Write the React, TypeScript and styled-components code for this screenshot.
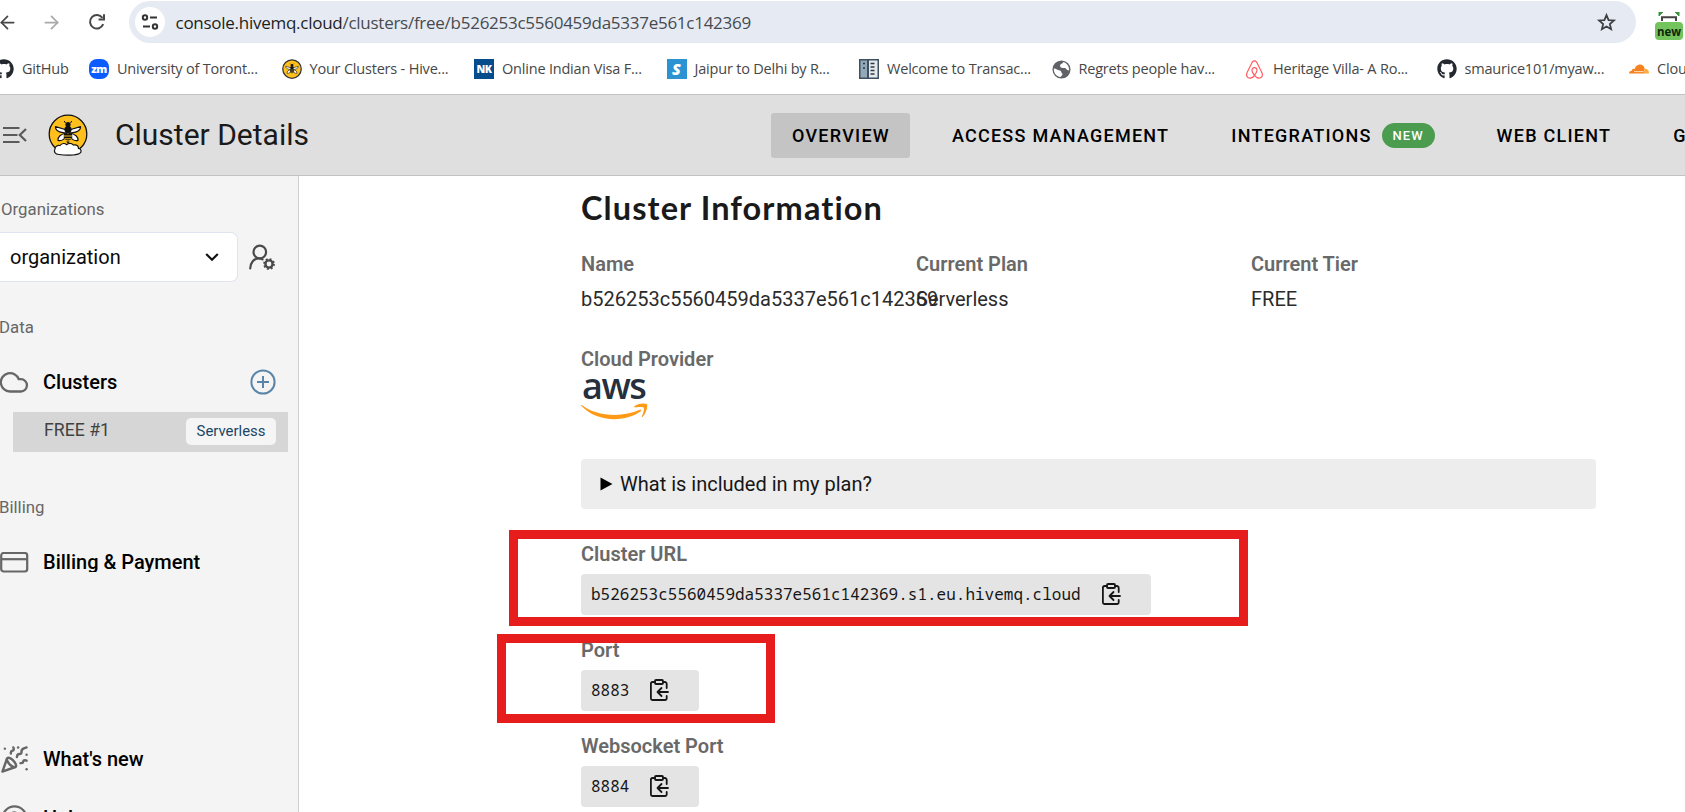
import React from "react";
import styled, { createGlobalStyle } from "styled-components";
import { FaGithub, FaAirbnb } from "react-icons/fa";
import { ArrowLeft, ArrowRight, PartyPopper, CircleHelp } from "lucide-react";

const GlobalStyle = createGlobalStyle`
  * { box-sizing: border-box; }
  body { margin: 0; background: #fff; font-family: Roboto, "Liberation Sans", sans-serif; overflow: hidden; }
  svg { display: block; flex: none; }
`;

const Page = styled.div`
  position: relative;
  display: flex;
  flex-direction: column;
  width: 1685px;
  height: 812px;
  overflow: hidden;
`;

/* ---------- Browser chrome ---------- */

const AddressRow = styled.div`
  display: flex;
  align-items: center;
  height: 44px;
  flex: none;
`;

const NavButtons = styled.div`
  display: flex;
  align-items: center;
  gap: 23px;
  width: 129px;
  color: #474747;
  svg:first-child { margin-left: -3px; }
  svg:last-child { margin-left: 2px; }
`;

const AddressBar = styled.div`
  display: flex;
  align-items: center;
  width: 1507px;
  height: 42px;
  padding: 0 19px 0 6px;
  border-radius: 21px;
  background: #e6ebf3;
`;

const SiteInfo = styled.div`
  display: flex;
  align-items: center;
  justify-content: center;
  width: 30px;
  height: 30px;
  margin-right: 10.5px;
  border-radius: 50%;
  background: #fff;
`;

const UrlText = styled.div`
  flex: 1;
  padding-top: 2px;
  font: 400 17px/24px "Open Sans", "Noto Sans", sans-serif;
  letter-spacing: -0.265px;
  color: #474a4f;
  b { font-weight: 400; color: #1d1e20; }
`;

const Extension = styled.div`
  display: flex;
  flex-direction: column;
  align-items: center;
  width: 28px;
  margin-left: 19px;
  padding-top: 8px;
`;

const ExtensionTag = styled.div`
  width: 28px;
  height: 18px;
  border-radius: 4px;
  background: #74c45d;
  color: #10240c;
  font: 700 11.5px/20px "Open Sans", sans-serif;
  text-align: center;
`;

const Bookmarks = styled.div`
  display: flex;
  align-items: center;
  height: 50px;
  margin-left: -6px;
  flex: none;
`;

const Bookmark = styled.div<{ $width?: number }>`
  display: flex;
  align-items: center;
  flex: none;
  gap: 8px;
  width: ${(p) => p.$width ?? 192.5}px;
  font: 400 14.5px/20px "Open Sans", "Noto Sans", sans-serif;
  letter-spacing: -0.2px;
  color: #474747;
  white-space: nowrap;
`;

const Favicon = styled.div<{ $bg?: string; $radius?: number; $size?: number; $spacing?: number }>`
  display: flex;
  align-items: center;
  justify-content: center;
  width: 20px;
  height: 20px;
  flex: none;
  border-radius: ${(p) => p.$radius ?? 0}px;
  background: ${(p) => p.$bg ?? "transparent"};
  color: #fff;
  font: 800 ${(p) => p.$size ?? 11}px/18px "Open Sans", sans-serif;
  letter-spacing: ${(p) => p.$spacing ?? 0}px;
`;

/* ---------- Console header ---------- */

const Header = styled.header`
  display: flex;
  align-items: center;
  flex: none;
  height: 82px;
  border-top: 1px solid #c2c2c2;
  border-bottom: 1px solid #c2c2c2;
  background: #dfdfdf;
`;

const Brand = styled.div`
  display: flex;
  align-items: center;
  flex: none;
  width: 771px;
  padding-left: 3px;
`;

const Logo = styled.div`
  margin-left: 21px;
`;

const Title = styled.div`
  margin-left: 27px;
  font-size: 30px;
  line-height: 36px;
  color: #1a1a1a;
`;

const Tabs = styled.nav`
  display: flex;
  flex: none;
  gap: 21px;
`;

const Tab = styled.div<{ $active?: boolean }>`
  display: flex;
  align-items: center;
  flex: none;
  height: 45px;
  padding: 0 20px 0 21px;
  border-radius: 3px;
  background: ${(p) => (p.$active ? "#c4c4c4" : "transparent")};
  color: #000;
  font-size: 18px;
  font-weight: 500;
  letter-spacing: 1.25px;
  white-space: nowrap;
`;

const NewBadge = styled.span`
  margin-left: 10px;
  width: 53px;
  height: 25px;
  border-radius: 13px;
  background: #4c9c50;
  color: #fff;
  font-size: 13px;
  font-weight: 500;
  line-height: 26px;
  letter-spacing: 1.1px;
  text-align: center;
`;

/* ---------- Sidebar ---------- */

const Body = styled.div`
  display: flex;
  flex: 1;
  min-height: 0;
`;

const Sidebar = styled.aside`
  display: flex;
  flex-direction: column;
  width: 299px;
  flex: none;
  border-right: 1px solid #cfcfcf;
  background: #f4f4f4;
  overflow: hidden;
`;

const SectionLabel = styled.div<{ $top: number; $indent?: number }>`
  flex: none;
  margin: ${(p) => p.$top}px 0 0 ${(p) => p.$indent ?? -1}px;
  font-size: 16.8px;
  line-height: 20px;
  color: #666;
`;

const OrgRow = styled.div`
  display: flex;
  align-items: center;
  gap: 11px;
  margin-top: 13px;
`;

const OrgSelect = styled.div`
  display: flex;
  align-items: center;
  justify-content: space-between;
  width: 238px;
  height: 50px;
  padding: 0 18px 1px 10px;
  border: 1px solid #dfe4f0;
  border-left: 0;
  border-radius: 0 7px 7px 0;
  background: #fff;
  font-size: 20px;
  color: #0a0a0a;
`;

const MenuItem = styled.div<{ $top: number }>`
  display: flex;
  align-items: center;
  flex: none;
  height: 28px;
  margin-top: ${(p) => p.$top}px;
  color: #666;
`;

const MenuText = styled.div`
  flex: 1;
  height: 24px;
  margin-left: 14px;
  overflow: hidden;
  font-size: 20px;
  font-weight: 500;
  line-height: 25px;
  color: #000;
`;

const ClippedText = styled(MenuText)`
  height: 20px;
  line-height: 21px;
`;

const PlusWrap = styled.div`
  margin-right: 22px;
`;

const ClusterRow = styled.div`
  display: flex;
  align-items: center;
  justify-content: space-between;
  flex: none;
  width: 275px;
  height: 40px;
  margin: 16px 0 0 13px;
  padding: 0 12px 0 31px;
  background: #d6d6d6;
  font-size: 17.7px;
  color: #424242;
`;

const ClusterName = styled.span`
  padding-bottom: 4px;
`;

const PlanChip = styled.span`
  width: 90px;
  height: 27px;
  margin-bottom: 1px;
  border-radius: 5px;
  background: #f5f5f5;
  color: #1b4566;
  font-size: 14.9px;
  line-height: 26px;
  text-align: center;
`;

/* ---------- Main ---------- */

const Main = styled.main`
  flex: 1;
  padding: 12px 0 0 282px;
`;

const Heading = styled.h1`
  margin: 0;
  font: 700 32.5px/40px Lato, sans-serif;
  letter-spacing: 1.1px;
  color: #1a1a1a;
  white-space: nowrap;
`;

const InfoGrid = styled.div`
  display: grid;
  grid-template-columns: repeat(3, 335px);
  margin-top: 24px;
`;

const Label = styled.div`
  font-size: 20px;
  font-weight: 600;
  line-height: 24px;
  color: #696969;
`;

const Value = styled.div`
  margin-top: 11px;
  font-size: 20px;
  line-height: 24px;
  color: #2b2b2b;
`;

const Provider = styled.div`
  margin-top: 36px;
  height: 112px;
`;

const AwsWord = styled.div`
  height: 32px;
  margin-left: 1px;
  font: 600 36px/29px "Open Sans", sans-serif;
  letter-spacing: -1.5px;
  color: #252f3e;
`;

const PlanDetails = styled.div`
  display: flex;
  align-items: center;
  width: 1015px;
  height: 50px;
  padding-left: 19px;
  gap: 7px;
  border-radius: 4px;
  background: #ededed;
  font-size: 20px;
  color: #161616;
`;

const Field = styled.div<{ $top: number }>`
  margin-top: ${(p) => p.$top}px;
`;

const CodeBox = styled.div`
  display: inline-flex;
  align-items: center;
  height: 41px;
  margin-top: 8px;
  padding: 0 28px 2px 10px;
  border-radius: 4px;
  background: #e4e4e4;
  font: 400 16px/20px "Noto Sans Mono", "DejaVu Sans Mono", monospace;
  color: #161616;
  vertical-align: top;
  svg { margin-left: 18px; }
`;

const Highlight = styled.div<{ $x: number; $y: number; $w: number; $h: number }>`
  position: absolute;
  left: ${(p) => p.$x}px;
  top: ${(p) => p.$y}px;
  width: ${(p) => p.$w}px;
  height: ${(p) => p.$h}px;
  border: 9px solid #e71c1c;
`;

/* ---------- Icons ---------- */

const ReloadIcon = () => (
  <svg width="20" height="20" viewBox="0 0 20 20" fill="none" stroke="#474747" strokeWidth="2">
    <path d="M16.2 12.2A6.8 6.8 0 1 1 15.4 5.8" />
    <path d="M17 2.2v5.3h-5.4" />
  </svg>
);

const TuneIcon = () => (
  <svg width="18" height="18" viewBox="0 0 18 18" fill="none" stroke="#333" strokeWidth="2">
    <circle cx="4" cy="4.5" r="2.2" />
    <path d="M9 4.5h7M2 13.5h7" />
    <circle cx="14" cy="13.5" r="2.2" />
  </svg>
);

const StarIcon = () => (
  <svg width="21" height="21" viewBox="0 0 24 24" fill="none" stroke="#3d4043" strokeWidth="2">
    <path d="M12 3.500l2.400 5.700 6.100.500-4.700 4 1.500 6-5.300-3.200-5.300 3.200 1.500-6-4.700-4 6.100-.5z" />
  </svg>
);

const ScanIcon = () => (
  <svg width="24" height="10" viewBox="0 0 24 10" fill="none">
    <path d="M2 0h4L2 4zM22 0h-4l4 4z" fill="#3d9140" stroke="#3d9140" />
    <path d="M5 9V5.200h14V9" stroke="#444" strokeWidth="2" />
  </svg>
);

const Bee = () => (
  <>
    <g fill="#fff" stroke="#111" strokeWidth="1.200" strokeLinejoin="round">
      <path d="M19 16L7.500 12.600c-.3 3.400 3 6.400 11.500 6.400zM21 16l11.500-3.400c.3 3.400-3 6.400-11.500 6.400z" />
      <path d="M18 19c-5 1-8.500 4-8 7.500 4 1 7.500-2 9-6zM22 19c5 1 8.500 4 8 7.500-4 1-7.500-2-9-6z" />
    </g>
    <circle cx="20" cy="10.500" r="2.600" fill="#111" />
    <ellipse cx="20" cy="15.500" rx="3.600" ry="3.600" fill="#111" />
    <path d="M17.500 9l-1.300-2M22.500 9l1.300-2" stroke="#111" />
    <path d="M15.800 19.500h8.400v4c0 1.500-1.500 2.500-4.200 3-2.700-.5-4.200-1.500-4.200-3z" fill="#111" />
    <path d="M16 22h8M16.500 24.800h7" stroke="#ffc01e" strokeWidth="1" />
  </>
);

const HiveLogo = () => (
  <svg width="40" height="42" viewBox="0 0 40 42">
    <circle cx="20" cy="20" r="18.800" fill="#ffc01e" stroke="#111" strokeWidth="1.300" />
    <Bee />
    <path d="M18.200 27.600h3.600L20 29.800z" fill="#111" />
    <path
      d="M11 40.500c-4 0-5.500-3-4-5.500 0-3 3-4 5-3.500 2-2.500 5-2.500 6.500-.8 2-1.500 5-1.700 7 .3 4-.5 5 1.500 5 3.500 3 .5 3.500 3.500 1 5-4 2-14 2-20.500 1z"
      fill="#fff"
      stroke="#111"
      strokeWidth="1.200"
    />
  </svg>
);

const HiveFavicon = () => (
  <svg width="20" height="20" viewBox="0 0 40 40">
    <circle cx="20" cy="20" r="18.500" fill="#ffc01e" stroke="#333" strokeWidth="2.500" />
    <g transform="translate(0 2)">
      <Bee />
    </g>
  </svg>
);

const CollapseIcon = () => (
  <svg width="24" height="18" viewBox="0 0 24 18" fill="none" stroke="#5a5a5a" strokeWidth="2.200">
    <path d="M0 2h16.500M0 9h14.500M0 16h16.500M23 3L16.800 9l6.200 6" />
  </svg>
);

const BuildingIcon = () => (
  <svg width="20" height="20" viewBox="0 0 20 20">
    <path fill="#3f5160" d="M0 0h20v20H0z" />
    <path fill="#93a9b8" d="M1.500 1.500h6.500v17H1.500z" />
    <path fill="#e4e9ec" d="M10 1.500h8.500v17H10z" />
    <path stroke="#2c3b47" strokeWidth="1.600" d="M4 4.500h2M4 9h2M11.500 4.500h4M11.500 8h4M11.500 11.500h4M11.500 15h4" />
  </svg>
);

const GlobeIcon = () => (
  <svg width="19" height="19" viewBox="0 0 20 20">
    <circle cx="10" cy="10" r="9.500" fill="#5f6368" />
    <path
      d="M2 9c3 0 3.500 2 6 2 2 0 1.500 2.500 3 3.500.5 1.500-1.500 2-2 3.500C4.500 17.500 1.500 13.500 2 9zM12 2.200c-.5 2-3.500 1.800-3.500 4 0 1.500 2 2.500 4.500 2.300 2 0 2 2.500 5 2.500C18.200 7 16 3.500 12 2.200z"
      fill="#fff"
    />
  </svg>
);

const CloudflareIcon = () => (
  <svg width="20" height="20" viewBox="0 0 20 20">
    <path d="M0 14.500c0-1.700 1.300-2.800 2.900-2.700-.1-1.600 1.500-2.500 2.800-1.800C6.500 7.200 8.600 5.500 11 5.500c2.500 0 4.300 1.700 4.700 4.200l-.6 4.800z" fill="#f6821f" />
    <path d="M14.200 14.500l2-4.700c2.200 0 3.800 1.900 3.800 4.200 0 .3-.1.500-.3.500z" fill="#fbad41" />
    <path d="M5 12.600h9.700" stroke="#fff" strokeWidth=".7" />
  </svg>
);

const UserCogIcon = () => (
  <svg width="27" height="27" viewBox="0 0 27 27" fill="none" stroke="#4a4a4a" strokeWidth="2.200" strokeLinecap="round">
    <circle cx="10.800" cy="8" r="6.300" />
    <path d="M1.200 24.500c0-5.500 3.500-10 8.500-10 1.500 0 2.800.3 3.800.9" />
    <circle cx="20" cy="20" r="3.600" strokeWidth="2.400" />
    <circle cx="20" cy="20" r="5" strokeWidth="1.800" strokeDasharray="1.900 2.030" strokeLinecap="butt" />
  </svg>
);

const ChevronIcon = () => (
  <svg width="14" height="10" viewBox="0 0 14 10" fill="none" stroke="#111" strokeWidth="2.200">
    <path d="M1.200 2L7 7.800 12.800 2" />
  </svg>
);

const CloudIcon = () => (
  <svg width="29" height="22" viewBox="0 0 29 22" fill="none" stroke="#666" strokeWidth="2.300">
    <path d="M10 20.500a9.200 9.200 0 1 1 8.700-12.300h2.100a6.150 6.150 0 0 1 0 12.300z" />
  </svg>
);

const PlusIcon = () => (
  <svg width="26" height="26" viewBox="0 0 26 26" fill="none" stroke="#5b85a8" strokeWidth="2">
    <circle cx="13" cy="13" r="11.600" />
    <path d="M13 7v12M7 13h12" />
  </svg>
);

const CardIcon = () => (
  <svg width="29" height="21" viewBox="0 0 29 21" fill="none" stroke="#666" strokeWidth="2.200">
    <rect x="1.200" y="1" width="26" height="18.500" rx="2.500" />
    <path d="M1 7.200h26" />
  </svg>
);

const CopyIcon = () => (
  <svg width="24" height="24" viewBox="0 0 24 24" fill="none" stroke="#161616" strokeWidth="1.800" strokeLinecap="round" strokeLinejoin="round">
    <path d="M8 4H5.700a1.800 1.800 0 0 0-1.800 1.800v14.700a1.500 1.500 0 0 0 1.500 1.500h12.800a1.500 1.500 0 0 0 1.500-1.500V18M16 4h1.900a1.800 1.800 0 0 1 1.800 1.800V10" />
    <rect x="8" y="2" width="8" height="4" rx="1" />
    <path d="M21 14H10.500M14.500 10l-4 4 4 4" />
  </svg>
);

const AwsSmile = () => (
  <svg width="67" height="17" viewBox="0 0 68 17" fill="#ff9a16">
    <path d="M.3 1.700C9 8.500 21 12 34 12c9 0 18-2 25.600-5.300 1.200-.5 2 .8 1 1.600C53.500 13.500 44 16.300 34 16.300 21 16.300 8.500 11.500.2 2.600-.3 2 .1 1.400.3 1.700z" />
    <path d="M54 3.300C57.500.6 63.500-.2 66.800 1c1.200 2-.5 9-4.100 12.800-.6.500-1.200.2-.9-.5 1-2.500 2.800-7.300 1.800-8.700-1-1.200-6.100-.6-8.800-.3-.9.100-1.300-.5-.8-1z" />
  </svg>
);

const TriangleIcon = () => (
  <svg width="13" height="14" viewBox="0 0 13 14" fill="#000">
    <path d="M.5.500L12.500 7 .5 13.500z" />
  </svg>
);

const CodeField = ({ label, value, top }: { label: string; value: string; top: number }) => (
  <Field $top={top}>
    <Label>{label}</Label>
    <CodeBox>
      {value}
      <CopyIcon />
    </CodeBox>
  </Field>
);

export default function App() {
  return (
    <Page>
      <GlobalStyle />
      <AddressRow>
        <NavButtons>
          <ArrowLeft size={21} strokeWidth={2} />
          <ArrowRight size={21} strokeWidth={2} color="#a9a9a9" />
          <ReloadIcon />
        </NavButtons>
        <AddressBar>
          <SiteInfo>
            <TuneIcon />
          </SiteInfo>
          <UrlText>
            <b>console.hivemq.cloud</b>/clusters/free/b526253c5560459da5337e561c142369
          </UrlText>
          <StarIcon />
        </AddressBar>
        <Extension>
          <ScanIcon />
          <ExtensionTag>new</ExtensionTag>
        </Extension>
      </AddressRow>

      <Bookmarks>
        <Bookmark $width={95}>
          <FaGithub size={20} color="#24292f" />
          GitHub
        </Bookmark>
        <Bookmark>
          <Favicon $bg="#0b5cff" $radius={8} $size={11} $spacing={-0.5}>zm</Favicon>
          University of Toront...
        </Bookmark>
        <Bookmark>
          <HiveFavicon />
          Your Clusters - Hive...
        </Bookmark>
        <Bookmark>
          <Favicon $bg="#044c8c" $size={10.5} $spacing={-0.5}>NK</Favicon>
          Online Indian Visa F...
        </Bookmark>
        <Bookmark>
          <Favicon $bg="#2b93d1" $size={16}><i>S</i></Favicon>
          Jaipur to Delhi by R...
        </Bookmark>
        <Bookmark>
          <BuildingIcon />
          Welcome to Transac...
        </Bookmark>
        <Bookmark>
          <GlobeIcon />
          Regrets people hav...
        </Bookmark>
        <Bookmark>
          <FaAirbnb size={21} color="#ff5a5f" />
          Heritage Villa- A Ro...
        </Bookmark>
        <Bookmark>
          <FaGithub size={20} color="#24292f" />
          smaurice101/myaw...
        </Bookmark>
        <Bookmark>
          <CloudflareIcon />
          Cloudflare
        </Bookmark>
      </Bookmarks>

      <Header>
        <Brand>
          <CollapseIcon />
          <Logo>
            <HiveLogo />
          </Logo>
          <Title>Cluster Details</Title>
        </Brand>
        <Tabs>
          <Tab $active>OVERVIEW</Tab>
          <Tab>ACCESS MANAGEMENT</Tab>
          <Tab>
            INTEGRATIONS <NewBadge>NEW</NewBadge>
          </Tab>
          <Tab>WEB CLIENT</Tab>
          <Tab>GETTING STARTED</Tab>
        </Tabs>
      </Header>

      <Body>
        <Sidebar>
          <SectionLabel $top={23} $indent={1}>Organizations</SectionLabel>
          <OrgRow>
            <OrgSelect>
              organization
              <ChevronIcon />
            </OrgSelect>
            <UserCogIcon />
          </OrgRow>
          <SectionLabel $top={35}>Data</SectionLabel>
          <MenuItem $top={31}>
            <CloudIcon />
            <MenuText>Clusters</MenuText>
            <PlusWrap>
              <PlusIcon />
            </PlusWrap>
          </MenuItem>
          <ClusterRow>
            <ClusterName>FREE #1</ClusterName>
            <PlanChip>Serverless</PlanChip>
          </ClusterRow>
          <SectionLabel $top={45}>Billing</SectionLabel>
          <MenuItem $top={31}>
            <CardIcon />
            <ClippedText>Billing &amp; Payment</ClippedText>
          </MenuItem>
          <MenuItem $top={169}>
            <PartyPopper size={29} strokeWidth={2} />
            <MenuText>What's new</MenuText>
          </MenuItem>
          <MenuItem $top={31}>
            <CircleHelp size={29} strokeWidth={1.8} />
            <MenuText>Help</MenuText>
          </MenuItem>
        </Sidebar>

        <Main>
          <Heading>Cluster Information</Heading>
          <InfoGrid>
            <div>
              <Label>Name</Label>
              <Value>b526253c5560459da5337e561c142369</Value>
            </div>
            <div>
              <Label>Current Plan</Label>
              <Value>Serverless</Value>
            </div>
            <div>
              <Label>Current Tier</Label>
              <Value>FREE</Value>
            </div>
          </InfoGrid>
          <Provider>
            <Label>Cloud Provider</Label>
            <AwsWord>aws</AwsWord>
            <AwsSmile />
          </Provider>
          <PlanDetails>
            <TriangleIcon />
            What is included in my plan?
          </PlanDetails>
          <CodeField top={33} label="Cluster URL" value="b526253c5560459da5337e561c142369.s1.eu.hivemq.cloud" />
          <CodeField top={23} label="Port" value="8883" />
          <CodeField top={23} label="Websocket Port" value="8884" />
        </Main>
      </Body>

      <Highlight $x={509} $y={529.5} $w={739} $h={96.5} />
      <Highlight $x={497} $y={633.5} $w={278} $h={89.5} />
    </Page>
  );
}
